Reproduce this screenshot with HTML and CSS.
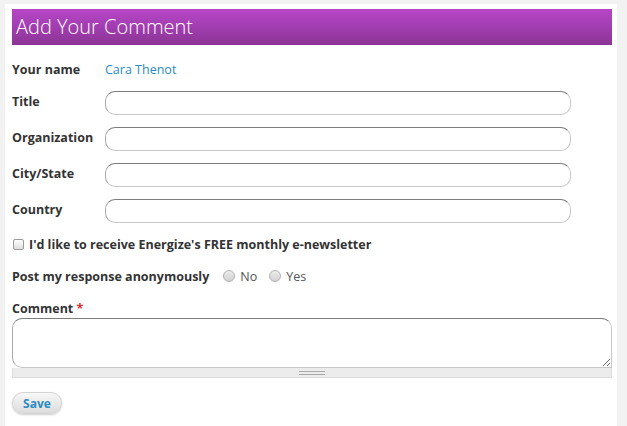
FILE: index.html
```html
<!DOCTYPE html>
<html lang="en">
<head>
  <meta charset="UTF-8" />
  <title>Add Your Comment</title>
  <link rel="stylesheet" href="styles.css">
</head>
<body>
  <div class="panel">
    <h2 class="title-bar">Add Your Comment</h2>

    <form class="comment-form">
      <div class="row row-name">
        <span class="label">Your name</span>
        <span class="user">Cara Thenot</span>
      </div>
      <div class="row">
        <label class="label" for="title">Title</label>
        <input type="text" id="title" class="field" />
      </div>
      <div class="row">
        <label class="label" for="org">Organization</label>
        <input type="text" id="org" class="field" />
      </div>
      <div class="row">
        <label class="label" for="city">City/State</label>
        <input type="text" id="city" class="field" />
      </div>
      <div class="row">
        <label class="label" for="country">Country</label>
        <input type="text" id="country" class="field" />
      </div>

      <div class="row row-check">
        <input type="checkbox" id="newsletter" class="check" />
        <label for="newsletter">I'd like to receive Energize's FREE monthly e-newsletter</label>
      </div>

      <div class="row row-radio">
        <span class="strong">Post my response anonymously</span>
        <label class="choice"><input type="radio" name="anon" class="radio" /> No</label>
        <label class="choice"><input type="radio" name="anon" class="radio" /> Yes</label>
      </div>

      <div class="row row-comment">
        <label for="comment" class="strong">Comment <span class="req">*</span></label>
      </div>
      <textarea id="comment" class="comment"></textarea>
      <div class="grip"><span></span></div>

      <button type="button" class="save">Save</button>
    </form>
  </div>
</body>
</html>
```

FILE: styles.css
```css
* {
  box-sizing: border-box;
}

body {
  margin: 0;
  background-color: #f2f2f2;
  font-family: "Open Sans", sans-serif;
  font-size: 12.5px;
  color: #333;
}

.panel {
  background-color: #fff;
  margin: 4px 10px 0 5px;
  padding: 5px 5px 12px 7px;
  min-height: 422px;
}

.title-bar {
  margin: 0;
  height: 36px;
  line-height: 36px;
  padding-left: 4px;
  font-size: 20px;
  font-weight: 300;
  color: #fff;
  background: linear-gradient(#b746c7, #a13db0 50%, #8b3495);
}

.comment-form {
  display: flex;
  flex-direction: column;
  align-items: flex-start;
}

.row {
  display: flex;
  align-items: center;
  height: 24px;
  margin-top: 12px;
}

.row-name {
  height: 20px;
  margin-top: 14px;
}

.label {
  width: 93px;
  font-weight: 700;
  padding-bottom: 3px;
}

.row-name .label {
  padding-bottom: 0;
}

.user {
  color: #2b8cc4;
}

.field {
  width: 466px;
  height: 24px;
  border: 1px solid #c8c8c8;
  border-top-color: #7c7c7c;
  border-left-color: #a8a8a8;
  border-radius: 10px;
  padding: 2px 8px;
  font: inherit;
}

.row-check {
  height: 20px;
  margin-top: 11px;
  font-weight: 700;
  gap: 5px;
}

.check {
  appearance: none;
  margin: 0 0 0 1px;
  width: 11px;
  height: 11px;
  border: 1px solid #9a9a9a;
  border-radius: 2px;
  background: linear-gradient(#fdfdfd, #dedede);
}

.row-radio {
  height: 20px;
}

.strong {
  font-weight: 700;
}

.choice {
  display: flex;
  align-items: center;
  gap: 5px;
  color: #555;
  margin-left: 14px;
}

.choice + .choice {
  margin-left: 12px;
}

.radio {
  appearance: none;
  margin: 0;
  width: 12px;
  height: 12px;
  border: 1px solid #b0b0b0;
  border-radius: 50%;
  background: linear-gradient(#ececec, #d2d2d2);
}

.row-comment {
  height: 20px;
}

.req {
  color: #d0312d;
}

.comment {
  display: block;
  width: 600px;
  height: 50px;
  border: 1px solid #c8c8c8;
  border-top-color: #7c7c7c;
  border-left-color: #a8a8a8;
  border-radius: 10px 10px 0 10px;
  font: inherit;
  resize: vertical;
}

.grip {
  width: 600px;
  height: 10px;
  background-color: #ececec;
  border: 1px solid #dcdcdc;
  border-top: none;
  display: flex;
  justify-content: center;
  align-items: center;
}

.grip span {
  width: 26px;
  height: 4px;
  border-top: 1px solid #aaa;
  border-bottom: 1px solid #aaa;
}

.save {
  margin-top: 14px;
  width: 50px;
  height: 22px;
  border: 1px solid #d4d4d4;
  border-radius: 11px;
  background: linear-gradient(#f7f7f7, #dcdcdc);
  box-shadow: 0 1px 2px rgba(0, 0, 0, 0.2);
  color: #2b8cc4;
  font: 700 12px "Open Sans", sans-serif;
  padding: 0;
  cursor: pointer;
}
```
